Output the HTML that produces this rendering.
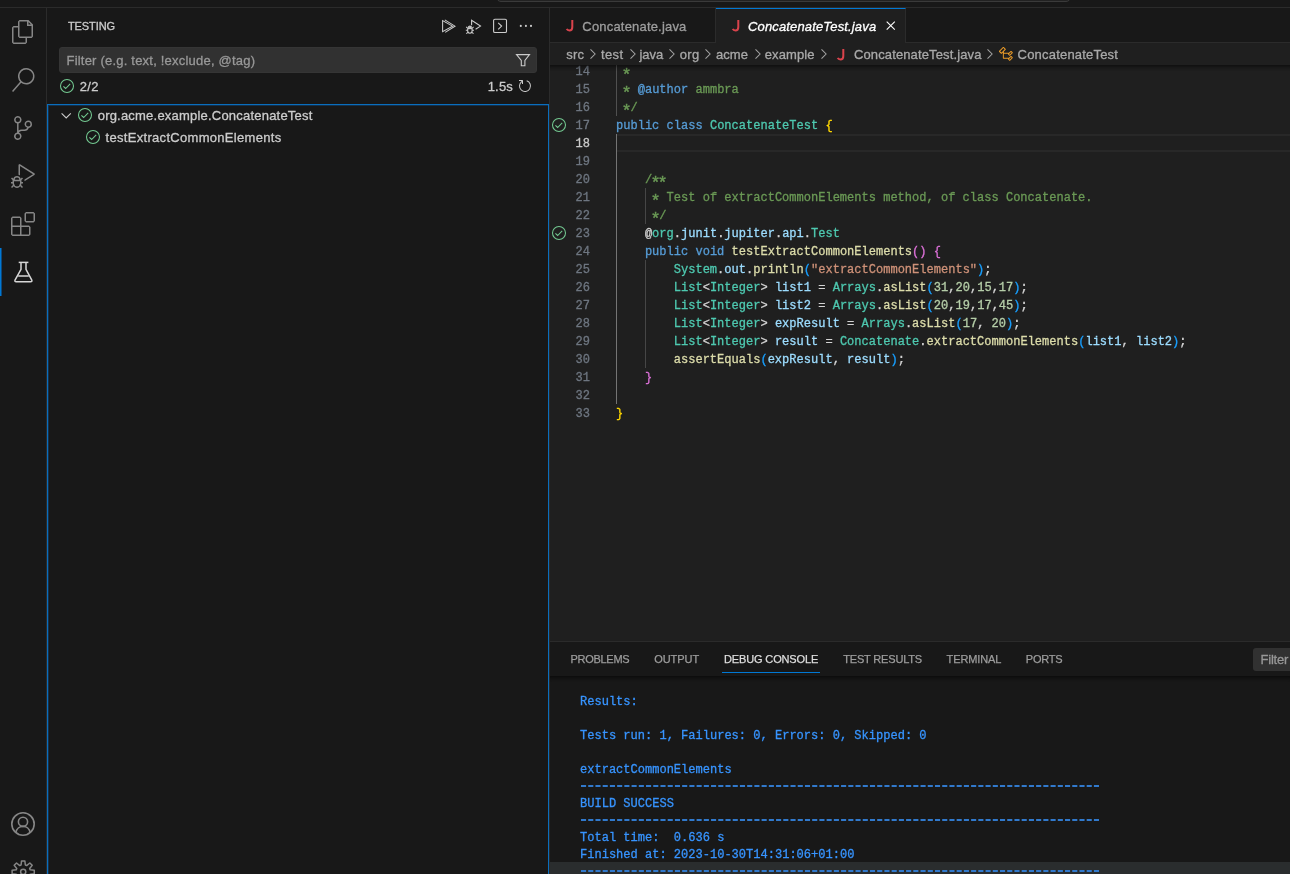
<!DOCTYPE html>
<html>
<head>
<meta charset="utf-8">
<title>ConcatenateTest.java</title>
<style>
html,body{margin:0;padding:0;}
body{width:1290px;height:874px;overflow:hidden;background:#181818;position:relative;font-family:"Liberation Sans",sans-serif;font-size:13px;color:#cccccc;}
#root{position:absolute;left:0;top:0;width:1290px;height:874px;overflow:hidden;will-change:transform;}
.abs{position:absolute;}
.t{position:absolute;white-space:pre;line-height:20px;height:20px;-webkit-text-stroke:0.3px;}
svg{position:absolute;overflow:visible;}
/* title bar */
#titlebar{left:0;top:0;width:1290px;height:7px;background:#181818;border-bottom:1px solid #2b2b2b;}
#cmdcenter{left:496px;top:-20px;width:573px;height:20px;background:#222222;border:1px solid #3a3a3a;border-radius:5px;}
/* activity bar */
#activity{left:0;top:8px;width:46px;height:866px;background:#181818;border-right:1px solid #2b2b2b;}
#activeind{left:0;top:248px;width:2px;height:48px;background:linear-gradient(to right,#0078d4 0,#0078d4 1px,#0c487a 1px,#0c487a 2px);}
/* sidebar */
#sidebar{left:47px;top:8px;width:502px;height:866px;background:#181818;border-right:1px solid #2b2b2b;}
#filter{left:59px;top:47px;width:478px;height:26px;background:#313131;border-radius:3px;box-sizing:border-box;border:1px solid #353535;}
#treefocus{left:47px;top:104px;width:500px;height:800px;border:1px solid #0a6ebd;box-shadow:inset 1px 1px 0 #12304c;}
/* editor */
#tabs{left:550px;top:8px;width:740px;height:34px;background:#181818;border-bottom:1px solid #2b2b2b;}
#tab1{left:550px;top:8px;width:165px;height:34px;border-right:1px solid #2b2b2b;border-bottom:1px solid #2b2b2b;background:#181818;}
#tab2{left:716px;top:8px;width:189px;height:35px;background:#1f1f1f;border-right:1px solid #2b2b2b;border-top:1px solid #0078d4;box-sizing:content-box;height:34px;}
#crumbs{left:550px;top:43px;width:740px;height:22px;background:#1f1f1f;}
#editor{left:550px;top:65px;width:740px;height:576px;background:#1f1f1f;overflow:hidden;}
#edshadow{left:550px;top:65px;width:740px;height:6px;box-shadow:#000000 0 6px 6px -6px inset;}
.ln{position:absolute;left:550px;width:40px;text-align:right;font-family:"Liberation Mono",monospace;font-size:12px;line-height:18px;height:18px;color:#6e7681;white-space:pre;-webkit-text-stroke:0.3px;}
.cl{position:absolute;left:616px;font-family:"Liberation Mono",monospace;font-size:12.04px;line-height:18px;height:18px;color:#d4d4d4;white-space:pre;-webkit-text-stroke:0.3px;}
.c{color:#6a9955}.k{color:#569cd6}.ty{color:#4ec9b0}.v{color:#9cdcfe}.f{color:#dcdcaa}.s{color:#ce9178}.n{color:#b5cea8}
.b1{color:#ffd700}.b2{color:#da70d6}.b3{color:#179fff}
.a{display:inline-block;font-style:normal;transform:translateY(4.1px) scale(1.4);}
.guide{position:absolute;width:1px;background:#464646;}
/* panel */
#panel{left:550px;top:641px;width:740px;height:233px;background:#181818;border-top:1px solid #2b2b2b;box-sizing:border-box;}
#pshadow{left:550px;top:676px;width:740px;height:6px;box-shadow:#000000 0 6px 6px -6px inset;}
#hoverrow{left:550px;top:862px;width:740px;height:12px;background:#2a2d2e;}
.pt{position:absolute;white-space:pre;font-size:11px;line-height:20px;height:20px;top:650px;transform:translateY(-0.7px);color:#9d9d9d;-webkit-text-stroke:0.25px;}
.dl{position:absolute;left:580px;font-family:"Liberation Mono",monospace;font-size:12.04px;line-height:17px;height:17px;color:#3794ff;white-space:pre;-webkit-text-stroke:0.3px;}
#pfilter{left:1253px;top:648px;width:50px;height:23px;background:#313131;border-radius:3px;}
</style>
</head>
<body>
<div id="root">
<!-- TITLE BAR -->
<div id="titlebar" class="abs"></div>
<div id="cmdcenter" class="abs"></div>

<!-- ACTIVITY BAR -->
<div id="activity" class="abs"></div>
<div id="activeind" class="abs"></div>
<!--ACTICONS-->
<svg style="left:11px;top:20px;" width="24" height="24" viewBox="0 0 24 24"><path fill="#868686" d="M17.5 0h-9L7 1.5V6H2.5L1 7.5v15.07L2.5 24h12.07L16 22.57V18h4.7l1.3-1.43V4.5L17.5 0zm0 2.12l2.38 2.38H17.5V2.12zm-3 20.38h-12v-15H7v9.07L8.5 18h6v4.5zm6-6h-12v-15H16V6h4.5v10.5z"/></svg>
<svg style="left:10.8px;top:68px;" width="24" height="24" viewBox="0 0 24 24"><path fill="#868686" d="M15.25 0a8.25 8.25 0 0 0-6.18 13.72L1 22.88l1.12 1 8.05-9.12A8.251 8.251 0 1 0 15.25.01V0zm0 15a6.75 6.75 0 1 1 0-13.5 6.75 6.75 0 0 1 0 13.5z"/></svg>
<svg style="left:10.7px;top:116.3px;" width="24" height="24" viewBox="0 0 24 24"><path fill="#868686" d="M21.007 8.222A3.738 3.738 0 0 0 15.045 5.2a3.737 3.737 0 0 0 1.156 6.583 2.988 2.988 0 0 1-2.668 1.67h-2.99a4.456 4.456 0 0 0-2.989 1.165V7.4a3.737 3.737 0 1 0-1.494 0v9.117a3.776 3.776 0 1 0 1.816.099 2.99 2.99 0 0 1 2.668-1.667h2.99a4.484 4.484 0 0 0 4.223-3.039 3.736 3.736 0 0 0 3.25-3.687zM4.565 3.738a2.242 2.242 0 1 1 4.484 0 2.242 2.242 0 0 1-4.484 0zm4.484 16.441a2.242 2.242 0 1 1-4.484 0 2.242 2.242 0 0 1 4.484 0zm8.221-9.715a2.242 2.242 0 1 1 0-4.485 2.242 2.242 0 0 1 0 4.485z"/></svg>
<svg style="left:11px;top:164.3px;" width="24" height="24" viewBox="0 0 24 24"><path fill="#868686" d="M10.94 13.5l-1.32 1.32a3.73 3.73 0 0 0-7.24 0L1.06 13.5 0 14.56l1.72 1.72-.22.22V18H0v1.5h1.5v.08c.077.489.214.966.41 1.42L0 22.94 1.06 24l1.65-1.65A4.308 4.308 0 0 0 6 24a4.31 4.31 0 0 0 3.29-1.65L10.94 24 12 22.94 10.09 21c.198-.464.336-.951.41-1.45v-.1H12V18h-1.5v-1.5l-.22-.22L12 14.56l-1.06-1.06zM6 13.5a2.25 2.25 0 0 1 2.25 2.25h-4.500A2.25 2.25 0 0 1 6 13.5zm3 6a3.33 3.33 0 0 1-3 3 3.33 3.33 0 0 1-3-3v-2.250h6v2.250zm14.760-9.900v1.260L13.500 17.370V15.600l8.500-5.370L9 2v9.460a5.070 5.070 0 0 0-1.500-.72V.630L8.640 0l15.120 9.600z"/></svg>
<svg style="left:11px;top:212px;" width="24" height="24" viewBox="0 0 24 24"><path fill="#868686" fill-rule="evenodd" d="M13.5 1.5L15 0h7.5L24 1.5V9l-1.5 1.5H15L13.500 9V1.5zm1.500 0V9h7.500V1.500H15zM0 15V6l1.500-1.500H9L10.500 6v7.500H18l1.500 1.500v7.500L18 24H1.500L0 22.500V15zm9-1.500V6H1.500v7.500H9zM9 15H1.500v7.500H9V15zm1.500 7.500H18V15h-7.500v7.500z"/></svg>
<svg style="left:0px;top:0px;" width="47" height="300" viewBox="0 0 47 300"><g fill="none" stroke="#d7d7d7" stroke-width="1.5" stroke-linejoin="round" stroke-linecap="butt"><path d="M18.7 262.4H28.4"/><path d="M21 262.4V269.3L15 280.2Q14.4 281.8 16.2 281.8H30.6Q32.4 281.8 31.8 280.2L26 269.3V262.4"/><path d="M18.2 276H28.8"/></g></svg>
<svg style="left:11.3px;top:811.8px;" width="24" height="24" viewBox="0 0 24 24"><g fill="none" stroke="#868686" stroke-width="1.6"><circle cx="12" cy="12" r="11.2"/><circle cx="12" cy="9.8" r="4.6"/><path d="M4.9 20.4A7.2 7.2 0 0 1 19.1 20.4"/></g></svg>
<svg style="left:0px;top:856px;" width="47" height="18" viewBox="0 856 47 18"><g fill="none" stroke="#868686" stroke-width="1.5" stroke-linejoin="round"><path d="M21.07 865.02L21.54 860.92L24.86 860.92L25.33 865.02L26.63 865.55L29.86 863.00L32.20 865.34L29.65 868.57L30.18 869.87L34.28 870.34L34.28 873.66L30.18 874.13L29.65 875.43L32.20 878.66L29.86 881.00L26.63 878.45L25.33 878.98L24.86 883.08L21.54 883.08L21.07 878.98L19.77 878.45L16.54 881.00L14.20 878.66L16.75 875.43L16.22 874.13L12.12 873.66L12.12 870.34L16.22 869.87L16.75 868.57L14.20 865.34L16.54 863.00L19.77 865.55Z"/><circle cx="23.2" cy="871.8" r="2.6"/></g></svg>
<!--/ACTICONS-->

<!-- SIDEBAR -->
<div id="sidebar" class="abs"></div>
<div class="t" id="tTesting" style="letter-spacing:-0.1px;left:68px;top:16px;font-size:11px;color:#cccccc;">TESTING</div>
<div id="filter" class="abs"></div>
<div class="t" id="tFilter" style="letter-spacing:0.21px;left:66.5px;top:51px;font-size:13px;color:#989898;">Filter (e.g. text, !exclude, @tag)</div>
<div class="t" id="t22" style="letter-spacing:0.3px;left:79.7px;top:76.5px;font-size:13px;color:#cccccc;">2/2</div>
<div class="t" id="t15s" style="letter-spacing:0.2px;left:487.7px;top:76.5px;font-size:13px;color:#cccccc;">1.5s</div>
<div id="treefocus" class="abs"></div>
<div class="t" id="tTree1" style="letter-spacing:0.21px;left:97.7px;top:105.5px;font-size:13px;color:#cccccc;">org.acme.example.ConcatenateTest</div>
<div class="t" id="tTree2" style="letter-spacing:0.3px;left:105.6px;top:127.5px;font-size:13px;color:#cccccc;">testExtractCommonElements</div>

<!--SBICONS-->
<svg style="left:440px;top:18px;" width="18" height="16" viewBox="440 18 18 16"><g fill="none" stroke="#cccccc" stroke-width="1.05" stroke-linejoin="miter"><path d="M442.6 20.6V31.7L452.5 26.15Z"/><path d="M444.8 19.9L455 26.15L445.2 32.4"/></g></svg>
<svg style="left:464px;top:18px;" width="18" height="18" viewBox="464 18 18 18"><g fill="none" stroke="#cccccc" stroke-width="1.1"><path d="M471.6 25.2V20.3L480.5 26.1L475.6 29.3"/><ellipse cx="469.9" cy="30.2" rx="2.3" ry="3.0"/><path d="M467.9 28.6H471.9"/><path d="M468.2 27.3A1.8 1.8 0 0 1 471.6 27.3"/><path d="M467.6 30.3H465.8M472.2 30.3H474M467.8 28.3L466.2 26.9M472 28.3L473.6 26.9M467.9 32.3L466.3 33.7M471.9 32.3L473.5 33.7"/></g></svg>
<svg style="left:492px;top:18px;" width="16" height="16" viewBox="492 18 16 16"><g fill="none" stroke="#cccccc" stroke-width="1.1"><rect x="493.6" y="19.3" width="12.9" height="13.2" rx="1.3"/><path d="M498.2 22.9L501.6 26.1L498.2 29.3"/></g></svg>
<svg style="left:518px;top:22px;" width="16" height="8" viewBox="518 22 16 8"><g fill="#cccccc"><circle cx="520.8" cy="25.9" r="1.05"/><circle cx="525.9" cy="25.9" r="1.05"/><circle cx="531" cy="25.9" r="1.05"/></g></svg>
<svg style="left:514px;top:52px;" width="18" height="16" viewBox="514 52 18 16"><path d="M516.5 54.6H529.5L524.9 60.5V65.8H521.3V60.5Z" fill="none" stroke="#cccccc" stroke-width="1.1" stroke-linejoin="miter"/></svg>
<svg style="left:517.2px;top:77.9px;" width="16" height="16" viewBox="0 0 16 16"><path fill="#cccccc" fill-rule="evenodd" d="M4.681 3H2V2h3.5l.5.5V6H5V4a5 5 0 1 0 4.53-.761l.302-.953A6 6 0 1 1 4.681 3z"/></svg>
<svg style="left:59.10px;top:78.30px;" width="16" height="16" viewBox="0 0 16 16"><circle cx="8" cy="8" r="6.5" fill="none" stroke="#73c991" stroke-width="1.05"/><path d="M4.4 8.3L6.65 10.5L11.2 5.95" fill="none" stroke="#73c991" stroke-width="1.05"/></svg>
<svg style="left:77.10px;top:107.20px;" width="16" height="16" viewBox="0 0 16 16"><circle cx="8" cy="8" r="6.5" fill="none" stroke="#73c991" stroke-width="1.05"/><path d="M4.4 8.3L6.65 10.5L11.2 5.95" fill="none" stroke="#73c991" stroke-width="1.05"/></svg>
<svg style="left:85.20px;top:129.10px;" width="16" height="16" viewBox="0 0 16 16"><circle cx="8" cy="8" r="6.5" fill="none" stroke="#73c991" stroke-width="1.05"/><path d="M4.4 8.3L6.65 10.5L11.2 5.95" fill="none" stroke="#73c991" stroke-width="1.05"/></svg>
<svg style="left:60px;top:110px;" width="12" height="10" viewBox="60 110 12 10"><path d="M61.6 113.3L66.2 117.9L70.8 113.3" fill="none" stroke="#cccccc" stroke-width="1.1"/></svg>
<!--/SBICONS-->
<!-- EDITOR TABS -->
<div id="tabs" class="abs"></div>
<div id="tab1" class="abs"></div>
<div id="tab2" class="abs"></div>
<div class="t" id="tTab1" style="letter-spacing:0.19px;left:582.3px;top:16.5px;font-size:13px;color:#9d9d9d;">Concatenate.java</div>
<div class="t" id="tTab2" style="letter-spacing:0.15px;left:748px;top:16.5px;font-size:13px;color:#ffffff;font-style:italic;">ConcatenateTest.java</div>

<!-- EDITOR -->
<div id="editor" class="abs"></div>
<!--EDBLOCK-->
<div class="abs" style="left:617px;top:134px;width:673px;height:14px;border-top:2px solid #282828;border-bottom:2px solid #282828;"></div>
<div class="guide" style="left:616px;top:65px;height:51px;background:#505050;"></div>
<div class="guide" style="left:616px;top:134px;height:270px;background:#747474;"></div>
<div class="guide" style="left:645px;top:188px;height:36px;"></div>
<div class="guide" style="left:645px;top:260px;height:108px;"></div>
<div class="ln" style="top:63px;">14</div>
<div class="cl" style="top:63px;"><span class="c"> <i class="a">*</i></span></div>
<div class="ln" style="top:81px;">15</div>
<div class="cl" style="top:81px;"><span class="c"> <i class="a">*</i> </span><span class="k">@author</span><span class="c"> ammbra</span></div>
<div class="ln" style="top:99px;">16</div>
<div class="cl" style="top:99px;"><span class="c"> <i class="a">*</i>/</span></div>
<div class="ln" style="top:117px;">17</div>
<div class="cl" style="top:117px;"><span class="k">public</span> <span class="k">class</span> <span class="ty">ConcatenateTest</span> <span class="b1">{</span></div>
<div class="ln" style="top:135px;color:#cccccc;">18</div>
<div class="ln" style="top:153px;">19</div>
<div class="ln" style="top:171px;">20</div>
<div class="cl" style="top:171px;">    <span class="c">/<i class="a">*</i><i class="a">*</i></span></div>
<div class="ln" style="top:189px;">21</div>
<div class="cl" style="top:189px;">    <span class="c"> <i class="a">*</i> Test of extractCommonElements method, of class Concatenate.</span></div>
<div class="ln" style="top:207px;">22</div>
<div class="cl" style="top:207px;">    <span class="c"> <i class="a">*</i>/</span></div>
<div class="ln" style="top:225px;">23</div>
<div class="cl" style="top:225px;">    @<span class="ty">org</span>.<span class="v">junit</span>.<span class="v">jupiter</span>.<span class="v">api</span>.<span class="ty">Test</span></div>
<div class="ln" style="top:243px;">24</div>
<div class="cl" style="top:243px;">    <span class="k">public</span> <span class="k">void</span> <span class="f">testExtractCommonElements</span><span class="b2">()</span> <span class="b2">{</span></div>
<div class="ln" style="top:261px;">25</div>
<div class="cl" style="top:261px;">        <span class="ty">System</span>.<span class="v">out</span>.<span class="f">println</span><span class="b3">(</span><span class="s">"extractCommonElements"</span><span class="b3">)</span>;</div>
<div class="ln" style="top:279px;">26</div>
<div class="cl" style="top:279px;">        <span class="ty">List</span>&lt;<span class="ty">Integer</span>&gt; <span class="v">list1</span> = <span class="ty">Arrays</span>.<span class="f">asList</span><span class="b3">(</span><span class="n">31</span>,<span class="n">20</span>,<span class="n">15</span>,<span class="n">17</span><span class="b3">)</span>;</div>
<div class="ln" style="top:297px;">27</div>
<div class="cl" style="top:297px;">        <span class="ty">List</span>&lt;<span class="ty">Integer</span>&gt; <span class="v">list2</span> = <span class="ty">Arrays</span>.<span class="f">asList</span><span class="b3">(</span><span class="n">20</span>,<span class="n">19</span>,<span class="n">17</span>,<span class="n">45</span><span class="b3">)</span>;</div>
<div class="ln" style="top:315px;">28</div>
<div class="cl" style="top:315px;">        <span class="ty">List</span>&lt;<span class="ty">Integer</span>&gt; <span class="v">expResult</span> = <span class="ty">Arrays</span>.<span class="f">asList</span><span class="b3">(</span><span class="n">17</span>, <span class="n">20</span><span class="b3">)</span>;</div>
<div class="ln" style="top:333px;">29</div>
<div class="cl" style="top:333px;">        <span class="ty">List</span>&lt;<span class="ty">Integer</span>&gt; <span class="v">result</span> = <span class="ty">Concatenate</span>.<span class="f">extractCommonElements</span><span class="b3">(</span><span class="v">list1</span>, <span class="v">list2</span><span class="b3">)</span>;</div>
<div class="ln" style="top:351px;">30</div>
<div class="cl" style="top:351px;">        <span class="f">assertEquals</span><span class="b3">(</span><span class="v">expResult</span>, <span class="v">result</span><span class="b3">)</span>;</div>
<div class="ln" style="top:369px;">31</div>
<div class="cl" style="top:369px;">    <span class="b2">}</span></div>
<div class="ln" style="top:387px;">32</div>
<div class="ln" style="top:405px;">33</div>
<div class="cl" style="top:405px;"><span class="b1">}</span></div>
<!--/EDBLOCK-->
<!-- BREADCRUMBS -->
<div id="crumbs" class="abs"></div>
<div id="edshadow" class="abs"></div>
<!--CRUMBS-->
<div class="t" id="tB0" style="letter-spacing:0.22px;left:566.2px;top:44.5px;font-size:13px;color:#a9a9a9;">src</div>
<div class="t" id="tB1" style="letter-spacing:0.383px;left:601px;top:44.5px;font-size:13px;color:#a9a9a9;">test</div>
<div class="t" id="tB2" style="letter-spacing:-0.015px;left:639.4px;top:44.5px;font-size:13px;color:#a9a9a9;">java</div>
<div class="t" id="tB3" style="letter-spacing:0.333px;left:679.7px;top:44.5px;font-size:13px;color:#a9a9a9;">org</div>
<div class="t" id="tB4" style="letter-spacing:0.1px;left:715.9px;top:44.5px;font-size:13px;color:#a9a9a9;">acme</div>
<div class="t" id="tB5" style="letter-spacing:0.123px;left:764.7px;top:44.5px;font-size:13px;color:#a9a9a9;">example</div>
<div class="t" id="tB6" style="letter-spacing:0.134px;left:853.9px;top:44.5px;font-size:13px;color:#a9a9a9;">ConcatenateTest.java</div>
<div class="t" id="tB7" style="letter-spacing:0.195px;left:1017.6px;top:44.5px;font-size:13px;color:#a9a9a9;">ConcatenateTest</div>
<svg style="left:590.4px;top:49.4px;" width="6.4" height="10" viewBox="0 0 6.4 10"><path d="M0.5 0.4 L5.1 5 L0.5 9.6" fill="none" stroke="#a3a3a3" stroke-width="1.05"/></svg>
<svg style="left:630px;top:49.4px;" width="6.4" height="10" viewBox="0 0 6.4 10"><path d="M0.5 0.4 L5.1 5 L0.5 9.6" fill="none" stroke="#a3a3a3" stroke-width="1.05"/></svg>
<svg style="left:669.4px;top:49.4px;" width="6.4" height="10" viewBox="0 0 6.4 10"><path d="M0.5 0.4 L5.1 5 L0.5 9.6" fill="none" stroke="#a3a3a3" stroke-width="1.05"/></svg>
<svg style="left:705.4px;top:49.4px;" width="6.4" height="10" viewBox="0 0 6.4 10"><path d="M0.5 0.4 L5.1 5 L0.5 9.6" fill="none" stroke="#a3a3a3" stroke-width="1.05"/></svg>
<svg style="left:754.6px;top:49.4px;" width="6.4" height="10" viewBox="0 0 6.4 10"><path d="M0.5 0.4 L5.1 5 L0.5 9.6" fill="none" stroke="#a3a3a3" stroke-width="1.05"/></svg>
<svg style="left:820.9px;top:49.4px;" width="6.4" height="10" viewBox="0 0 6.4 10"><path d="M0.5 0.4 L5.1 5 L0.5 9.6" fill="none" stroke="#a3a3a3" stroke-width="1.05"/></svg>
<svg style="left:987.3px;top:49.4px;" width="6.4" height="10" viewBox="0 0 6.4 10"><path d="M0.5 0.4 L5.1 5 L0.5 9.6" fill="none" stroke="#a3a3a3" stroke-width="1.05"/></svg>
<!--/CRUMBS-->
<!--EDICONS-->
<svg style="left:566.00px;top:19.80px;" width="10" height="13" viewBox="0 0 10 13"><path d="M6.3 0V7C6.3 9.2 5 10.5 3.4 10.5C2.2 10.5 1.2 9.9 0.7 8.9" fill="none" stroke="#d9434c" stroke-width="2"/></svg>
<svg style="left:731.70px;top:19.80px;" width="10" height="13" viewBox="0 0 10 13"><path d="M6.3 0V7C6.3 9.2 5 10.5 3.4 10.5C2.2 10.5 1.2 9.9 0.7 8.9" fill="none" stroke="#d9434c" stroke-width="2"/></svg>
<svg style="left:837.20px;top:48.70px;" width="10" height="13" viewBox="0 0 10 13"><path d="M6.3 0V7C6.3 9.2 5 10.5 3.4 10.5C2.2 10.5 1.2 9.9 0.7 8.9" fill="none" stroke="#d9434c" stroke-width="2"/></svg>
<svg style="left:885px;top:20px;" width="12" height="12" viewBox="885 20 12 12"><path d="M886.7 21.6L894.8 29.7M894.8 21.6L886.7 29.7" fill="none" stroke="#ffffff" stroke-width="1.1"/></svg>
<svg style="left:998.2px;top:45.7px;" width="16" height="16" viewBox="0 0 16 16"><path fill="#ee9d28" d="M11.34 9.71h.71l2.67-2.67v-.71L13.38 5h-.7l-1.82 1.81h-5V5.56l1.86-1.85V3l-2-2H5L1 5v.71l2 2h.71l1.14-1.15v5.79l.5.5H10v.52l1.33 1.330h.71l2.670-2.670v-.710L13.37 10h-.7l-1.860 1.850h-5v-4H10v.480l1.340 1.380zm1.690-3.650l.63.63-2 2-.63-.63 2-2zm-8.960-.1L3.380 6.620 2.120 5.360l3.250-3.280 1.260 1.260-2.560 2.620zm8.960 5.040l.63.63-2 2-.63-.63 2-2z"/></svg>
<svg style="left:551.20px;top:117.20px;" width="16" height="16" viewBox="0 0 16 16"><circle cx="8" cy="8" r="6.5" fill="none" stroke="#73c991" stroke-width="1.05"/><path d="M4.4 8.3L6.65 10.5L11.2 5.95" fill="none" stroke="#73c991" stroke-width="1.05"/></svg>
<svg style="left:551.20px;top:225.20px;" width="16" height="16" viewBox="0 0 16 16"><circle cx="8" cy="8" r="6.5" fill="none" stroke="#73c991" stroke-width="1.05"/><path d="M4.4 8.3L6.65 10.5L11.2 5.95" fill="none" stroke="#73c991" stroke-width="1.05"/></svg>
<!--/EDICONS-->

<!-- PANEL -->
<div id="panel" class="abs"></div>
<!--PANEL-->
<div id="pshadow" class="abs"></div>
<div id="hoverrow" class="abs"></div>
<div class="dl" style="top:694px;">Results:</div>
<div class="dl" style="top:728px;">Tests run: 1, Failures: 0, Errors: 0, Skipped: 0</div>
<div class="dl" style="top:762px;">extractCommonElements</div>
<svg style="left:581px;top:785px;" width="520" height="2" viewBox="0 0 520 2"><path d="M0 1H518.00" fill="none" stroke="#3179cc" stroke-width="2" stroke-dasharray="5.1 2.124"/></svg>
<div class="dl" style="top:796px;">BUILD SUCCESS</div>
<svg style="left:581px;top:819px;" width="520" height="2" viewBox="0 0 520 2"><path d="M0 1H518.00" fill="none" stroke="#3179cc" stroke-width="2" stroke-dasharray="5.1 2.124"/></svg>
<div class="dl" style="top:830px;">Total time:  0.636 s</div>
<div class="dl" style="top:847px;">Finished at: 2023-10-30T14:31:06+01:00</div>
<svg style="left:581px;top:870px;" width="520" height="2" viewBox="0 0 520 2"><path d="M0 1H518.00" fill="none" stroke="#3179cc" stroke-width="2" stroke-dasharray="5.1 2.124"/></svg>
<div class="pt" id="tP1" style="letter-spacing:-0.29px;left:570.5px;color:#9d9d9d;">PROBLEMS</div>
<div class="pt" id="tP2" style="letter-spacing:-0.05px;left:654.2px;color:#9d9d9d;">OUTPUT</div>
<div class="pt" id="tP3" style="letter-spacing:-0.14px;left:724px;color:#dedede;">DEBUG CONSOLE</div>
<div class="pt" id="tP4" style="letter-spacing:-0.17px;left:843.2px;color:#9d9d9d;">TEST RESULTS</div>
<div class="pt" id="tP5" style="letter-spacing:-0.13px;left:946.6px;color:#9d9d9d;">TERMINAL</div>
<div class="pt" id="tP6" style="letter-spacing:-0.2px;left:1025.8px;color:#9d9d9d;">PORTS</div>
<div class="abs" style="left:722px;top:672px;width:98px;height:1px;background:#0078d4;"></div>
<div id="pfilter" class="abs"></div>
<div class="t" id="tPFilter" style="letter-spacing:-0.2px;left:1260.5px;top:649.5px;font-size:13px;color:#989898;">Filter</div>
<!--/PANEL-->

</div>
</body>
</html>
